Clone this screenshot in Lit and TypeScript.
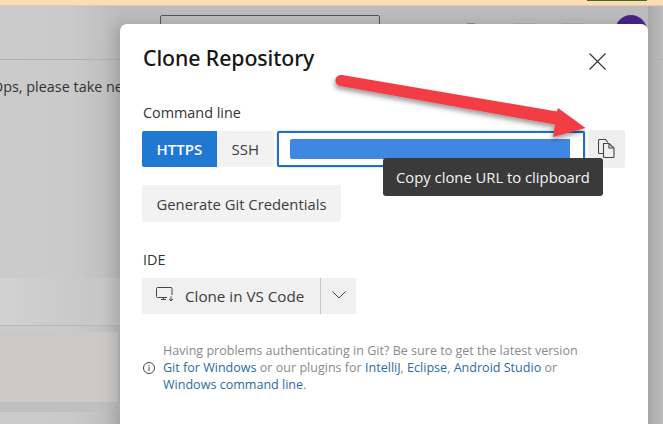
import { LitElement, html, css, svg } from "lit";
import { customElement } from "lit/decorators.js";

@customElement("app-root")
export class AppRoot extends LitElement {
  static styles = css`
    :host { display: block; width: 663px; height: 424px; overflow: hidden; position: relative;
      font-family: "Open Sans", "Noto Sans", sans-serif; color: #333; }
    * { box-sizing: border-box; }
    .page { position: absolute; inset: 0; background: linear-gradient(90deg, #cbcbcb 0, #cacaca 70px, #bcbcbc 120px); overflow: hidden; }
    .rightside { position: absolute; left: 648px; top: 0; right: 0; bottom: 0; background: linear-gradient(90deg, #aaa, #bcbcbc 100%); }
    .top { position: absolute; left: 0; right: 0; top: 0; height: 6px; background: #fbdcb8; border-bottom: 1px solid #e9c9a2; }
    .green { position: absolute; left: 587px; width: 60px; top: 0; height: 1px; background: #3f6b2e; }
    .search { position: absolute; left: 160px; top: 15px; width: 220px; height: 30px; border: 1px solid #555; border-radius: 2px; }
    .avatar { position: absolute; left: 615px; top: 15px; width: 32px; height: 32px; border-radius: 50%; background: #47238a; }
    .hline { position: absolute; left: 0; right: 0; top: 59px; height: 1px; background: #b0b0b0; }
    .behind { position: absolute; left: -8px; top: 77px; font-size: 14.4px; line-height: 20px; color: #333; white-space: nowrap; }
    .band { position: absolute; left: 0; width: 120px; top: 278px; height: 48px; background: linear-gradient(90deg, #d2d2d2, #c4c4c4); border-bottom: 1px solid #b8b8b8; }
    .band2 { position: absolute; left: 0; width: 118px; top: 332px; height: 70px; background: #cbc9c6; }
    .band3 { position: absolute; left: 0; width: 120px; top: 402px; height: 10px; background: #bfbfbf; }
    .speck { position: absolute; top: 23px; height: 1px; background: #8c8c8c; border-radius: 1px; }
    .s1 { left: 467px; width: 8px; }
    .s2 { left: 514px; width: 22px; background: #b0b0b0; }
    .s3 { left: 562px; width: 22px; background: #b0b0b0; }

    .modal { position: absolute; left: 120px; top: 24px; width: 528px; height: 420px; background: #fff;
      border-radius: 7px 7px 0 0; padding: 0 23px; box-shadow: -6px 0 14px rgba(0,0,0,.14); }
    .head { height: 68px; display: flex; align-items: flex-start; justify-content: space-between; }
    h1 { margin: 16px 0 0; font-size: 21.3px; line-height: 36px; font-weight: 500; color: #161616; font-family: "Noto Sans", sans-serif; letter-spacing: -0.1px; }
    .close { margin: 29px 19px 0 0; width: 17px; height: 17px; display: block; }
    .label { font-size: 14.4px; line-height: 20px; color: #333; margin: 11px 0 0; height: 20px; }
    .row { display: flex; align-items: center; margin-top: 7px; margin-left: -1px; height: 38px; }
    .seg { height: 36px; display: flex; align-items: center; justify-content: center; font-size: 15px; font-weight: 600; }
    .https { width: 75px; background: #1f78d1; color: #fff; border-radius: 2px 0 0 2px; }
    .ssh { width: 57px; background: #f2f2f2; color: #3c3c3c; border-radius: 0 2px 2px 0; font-weight: 500; }
    .input { width: 309px; height: 36px; margin-left: 3px; border: 2px solid #1f70c1; border-radius: 2px; padding: 6px 13px 6px 11px; background: #fff; box-shadow: 0 0 2px rgba(31,112,193,.5); }
    .sel { height: 100%; background: #3f87e0; border-radius: 2px 0 0 2px; }
    .copy { width: 37px; height: 38px; margin-left: 3px; background: #efefef; border-radius: 2px; display: flex; align-items: center; justify-content: center; }
    .copy svg { margin-bottom: 2px; }
    .btn { display: inline-flex; align-items: center; height: 37px; background: #f2f2f2; border-radius: 2px; font-size: 14.8px; font-weight: 500; color: #3c3c3c; }
    .gen { margin: 17px 0 0 -1px; width: 199px; justify-content: center; }
    .ide { margin-top: 28px; }
    .split { display: flex; margin: 8px 0 0 -1px; height: 36px; width: 214px; background: #f0f0f0; border-radius: 2px; font-size: 15.2px; color: #3c3c3c; font-weight: 500; }
    .main { width: 179px; display: flex; align-items: center; padding-left: 14px; gap: 11px; border-right: 1px solid #c8c8c8; }
    .main svg { margin-bottom: 3px; }
    .drop { flex: 1; display: flex; align-items: center; justify-content: center; }
    .drop svg { margin-bottom: 2px; }
    .info { display: flex; align-items: center; gap: 8px; margin-top: 29px; margin-left: 0; }
    .info svg { flex: none; }
    .info p { margin: 0; font-size: 12.55px; line-height: 16.8px; color: #8a8a8a; width: 425px; }
    a { color: #2a6aa8; text-decoration: none; }

    .tip { position: absolute; left: 263px; top: 134px; width: 220px; height: 38px; background: #3a3a3a; color: #f4f4f4;
      border-radius: 3px; font-size: 14.8px; display: flex; align-items: center; justify-content: center; }
    .arrow { position: absolute; left: 0; top: 0; overflow: visible; pointer-events: none; }
  `;

  render() {
    return html`
      <div class="page">
        <div class="rightside"></div>
        <div class="top"></div><div class="green"></div>
        <div class="search"></div>
        <div class="speck s1"></div><div class="speck s2"></div><div class="speck s3"></div>
        <div class="avatar"></div>
        <div class="hline"></div>
        <div class="behind">Ops, please take next</div>
        <div class="band"></div><div class="band2"></div><div class="band3"></div>
      </div>
      <div class="modal">
        <div class="head">
          <h1>Clone Repository</h1>
          <svg class="close" viewBox="0 0 17 17" fill="none" stroke="#333" stroke-width="1.1"><path d="M.5.5l16 16M16.5.5l-16 16"/></svg>
        </div>
        <div class="label">Command line</div>
        <div class="row">
          <div class="seg https">HTTPS</div>
          <div class="seg ssh">SSH</div>
          <div class="input"><div class="sel"></div></div>
          <div class="copy">
            <svg width="17" height="19" viewBox="0 0 17 19" fill="none" stroke="#444" stroke-width="1.1">
              <path d="M5 14.500H1.500a1 1 0 0 1-1-1V1.500a1 1 0 0 1 1-1H7.500L10 3.500"/>
              <path d="M5.500 4.500H11L16 9v8.500a1 1 0 0 1-1 1H6.500a1 1 0 0 1-1-1z"/>
              <path d="M11 4.500V9h5"/>
            </svg>
          </div>
        </div>
        <div class="btn gen">Generate Git Credentials</div>
        <div class="label ide">IDE</div>
        <div class="split">
          <div class="main">
            <svg width="18" height="15" viewBox="0 0 18 15" fill="none" stroke="#444" stroke-width="1">
              <path d="M11 10.500H1.500a1 1 0 0 1-1-1V1.500a1 1 0 0 1 1-1H15a1 1 0 0 1 1 1V8"/>
              <path d="M5 12.500h5M7.500 10.500v2M15 9.500v4.500M13 12l2 2 2-2"/>
            </svg>
            <span>Clone in VS Code</span>
          </div>
          <div class="drop">
            <svg width="14" height="8" viewBox="0 0 14 8" fill="none" stroke="#444" stroke-width="1"><path d="M.5.5L7 7l6.500-6.500"/></svg>
          </div>
        </div>
        <div class="info">
          <svg width="12" height="12" viewBox="0 0 12 12" fill="none" stroke="#444" stroke-width="1"><circle cx="6" cy="6" r="5.500"/><path d="M6 5v4M6 3v1.200"/></svg>
          <p>Having problems authenticating in Git? Be sure to get the latest version
            <a>Git for Windows</a> or our plugins for <a>IntelliJ</a>, <a>Eclipse</a>, <a>Android Studio</a> or
            <a>Windows command line</a>.</p>
        </div>
        <div class="tip">Copy clone URL to clipboard</div>
      </div>
      <svg class="arrow" width="663" height="424" viewBox="0 0 663 424">
        <defs><filter id="s" x="-10%" y="-30%" width="120%" height="170%"><feDropShadow dx="-1" dy="3" stdDeviation="2.500" flood-color="#000" flood-opacity=".4"/></filter></defs>
        ${svg`<path filter="url(#s)" fill="#f23c45" d="M342 75 L557 111.500 L558 108 L585.500 128 L553 137 L555 124.500 L340 86 A5.500 5.500 0 0 1 342 75Z"/>`}
      </svg>
    `;
  }
}
